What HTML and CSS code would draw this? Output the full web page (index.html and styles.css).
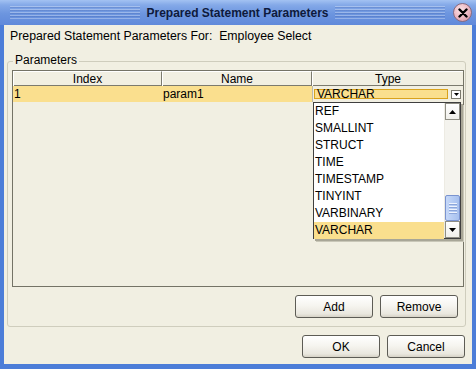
FILE: index.html
```html
<!DOCTYPE html>
<html>
<head>
<meta charset="utf-8">
<link rel="stylesheet" href="styles.css">
</head>
<body>
<div class="window">
  <div class="titlebar">
    <div class="stripes left"></div>
    <div class="title">Prepared Statement Parameters</div>
    <div class="stripes"></div>
    <div class="close"><svg width="10" height="10" viewBox="0 0 10 10"><path d="M1.5 1.5 L8.5 8.5 M8.5 1.5 L1.5 8.5" stroke="#000" stroke-width="2.4" stroke-linecap="round"/></svg></div>
  </div>
  <div class="content">
    <div class="prompt">Prepared Statement Parameters For:&nbsp; Employee Select</div>
    <div class="group">
      <div class="group-label">Parameters</div>
      <div class="table">
        <div class="thead">
          <div class="th">Index</div>
          <div class="th">Name</div>
          <div class="th">Type</div>
        </div>
        <div class="row">
          <div class="td">1</div>
          <div class="td">param1</div>
          <div class="td editor">
            <div class="combo"><span class="combo-text">VARCHAR</span></div>
            <div class="combo-btn"><svg width="5" height="3" viewBox="0 0 5 3"><path d="M0 0 H5 L2.5 3 Z" fill="#000"/></svg></div>
          </div>
        </div>
        <div class="popup">
          <div class="items">
            <div class="item">REF</div>
            <div class="item">SMALLINT</div>
            <div class="item">STRUCT</div>
            <div class="item">TIME</div>
            <div class="item">TIMESTAMP</div>
            <div class="item">TINYINT</div>
            <div class="item">VARBINARY</div>
            <div class="item selected">VARCHAR</div>
          </div>
          <div class="scrollbar">
            <div class="sb-btn"><svg width="7" height="4" viewBox="0 0 7 4"><path d="M0 4 H7 L3.5 0 Z" fill="#000"/></svg></div>
            <div class="sb-track">
              <div class="sb-thumb"><span></span><span></span><span></span><span></span></div>
            </div>
            <div class="sb-btn"><svg width="7" height="4" viewBox="0 0 7 4"><path d="M0 0 H7 L3.5 4 Z" fill="#000"/></svg></div>
          </div>
        </div>
      </div>
      <div class="btn-row inner">
        <button class="btn">Add</button>
        <button class="btn">Remove</button>
      </div>
    </div>
    <div class="btn-row outer">
      <button class="btn">OK</button>
      <button class="btn">Cancel</button>
    </div>
  </div>
</div>
</body>
</html>
```

FILE: styles.css
```css
* { box-sizing: border-box; }
html, body { margin: 0; padding: 0; }
body {
  width: 476px;
  height: 369px;
  overflow: hidden;
  font-family: "Liberation Sans", Arial, sans-serif;
  font-size: 12px;
  color: #000;
}
.window {
  width: 476px;
  height: 369px;
  display: flex;
  flex-direction: column;
}
.titlebar {
  height: 25px;
  flex: none;
  display: flex;
  align-items: center;
  padding: 0 4px 0 10px;
  background: linear-gradient(to bottom, #A3C2F2 0%, #84A9E8 20%, #6C95DF 55%, #6089DA 100%);
}
.stripes {
  flex: 1 0 0;
  height: 13px;
  background: repeating-linear-gradient(to bottom, rgba(255,255,255,0.30) 0 1px, rgba(40,70,150,0.20) 1px 2px, transparent 2px 3px);
}
.stripes.left {
  flex: 1 0 20px;
}
.title {
  font-weight: bold;
  font-size: 12px;
  color: #0E1A3C;
  padding: 0 6px;
  margin-top: 1px;
}
.close {
  width: 19px;
  height: 19px;
  margin-left: 8px;
  border-radius: 50%;
  border: 1px solid #8B6A7A;
  background: radial-gradient(circle at 40% 35%, #FBE4E8 0%, #EBB5C0 55%, #C98B9B 100%);
  display: flex;
  align-items: center;
  justify-content: center;
}
.content {
  flex: 1;
  background: #F1EFE2;
  border-left: 4px solid #4C7DD8;
  border-right: 4px solid #4C7DD8;
  border-bottom: 5px solid #4C7DD8;
  display: flex;
  flex-direction: column;
}
.prompt {
  height: 36px;
  padding: 3px 0 0 6px;
  line-height: 16px;
  font-size: 12.3px;
}
.group {
  position: relative;
  margin: 0 6px 0 3px;
  height: 266px;
  border: 1px solid #CFCDBD;
  border-radius: 3px;
  padding: 8px 1px 0 4px;
  display: flex;
  flex-direction: column;
}
.group-label {
  position: absolute;
  top: -9px;
  left: 5px;
  padding: 0 2px;
  line-height: 14px;
  background: #F1EFE2;
  font-size: 12px;
}
.table {
  position: relative;
  height: 217px;
  border: 1px solid #747366;
  background: #F1EFE2;
}
.thead {
  display: grid;
  grid-template-columns: 149px 150px 1fr;
  height: 15px;
  border-bottom: 1px solid #7B7A6E;
}
.th {
  text-align: center;
  line-height: 14px;
  border-right: 1px solid #7B7A6E;
  border-left: 1px solid #FFFFFF;
  border-top: 1px solid #FFFFFF;
  font-size: 12px;
}
.th:last-child { border-right: none; }
.row {
  display: grid;
  grid-template-columns: 149px 150px 1fr;
  height: 16px;
  background: #FADF8E;
}
.td {
  line-height: 16px;
  padding-left: 1px;
  font-size: 12px;
  white-space: nowrap;
  overflow: hidden;
}
.td.editor {
  display: flex;
  align-items: center;
  padding: 0 2px 0 1px;
  gap: 3px;
  background: #F1EFE2;
  border-left: 1px solid #BDBAA8;
  overflow: visible;
}
.combo {
  flex: 1;
  height: 10px;
  border: 1px solid #D9A21C;
  background: #FADF8E;
  position: relative;
}
.combo-text {
  position: absolute;
  left: 2px;
  top: -2px;
  line-height: 12px;
  font-size: 12px;
}
.combo-btn {
  width: 10px;
  height: 9px;
  border: 1px solid #7B7A6E;
  background: #FFFFFF;
  display: flex;
  align-items: center;
  justify-content: center;
}
.popup {
  position: absolute;
  left: 300px;
  top: 31px;
  width: 148px;
  height: 137px;
  border: 1px solid #3F3F3F;
  background: #FFFFFF;
  display: flex;
  box-shadow: 2px 2px 0 #A8A697, 3px 3px 0 #C9C7B8;
}
.items {
  flex: 1;
}
.item {
  height: 17px;
  line-height: 17px;
  padding-left: 1px;
  font-size: 12px;
}
.item.selected {
  background: #FADF8E;
}
.scrollbar {
  width: 16px;
  display: flex;
  flex-direction: column;
  background: #F4F3EE;
  border-left: 1px solid #EDEBE3;
}
.sb-btn {
  height: 17px;
  border: 1px solid #8F8E84;
  background: linear-gradient(#FFFFFF, #F0EFEA);
  display: flex;
  align-items: center;
  justify-content: center;
}
.sb-track {
  flex: 1;
  display: flex;
  flex-direction: column;
  justify-content: flex-end;
}
.sb-thumb {
  height: 26px;
  border: 1px solid #7A93CF;
  border-radius: 2px;
  background: linear-gradient(to right, #C6D8F8, #B3CAF3 60%, #A7C0EE);
  display: flex;
  flex-direction: column;
  align-items: center;
  justify-content: center;
  gap: 2px;
}
.sb-thumb span {
  display: block;
  width: 8px;
  height: 1px;
  background: #EEF3FD;
  box-shadow: 0 1px 0 #8CA6DA;
}
.btn-row {
  display: flex;
  justify-content: flex-end;
  gap: 7px;
}
.btn-row.inner {
  margin-top: 8px;
  padding-right: 6px;
}
.btn-row.outer {
  margin-top: 8px;
  padding-right: 7px;
}
.btn {
  width: 78px;
  height: 23px;
  border: 1px solid #5D5C55;
  border-radius: 3px;
  background: linear-gradient(to bottom, #FFFFFF 0%, #F6F5F0 45%, #E9E7DE 85%, #D6D2C6 100%);
  font-family: "Liberation Sans", Arial, sans-serif;
  font-size: 12px;
  color: #000;
  padding: 0;
}
```
